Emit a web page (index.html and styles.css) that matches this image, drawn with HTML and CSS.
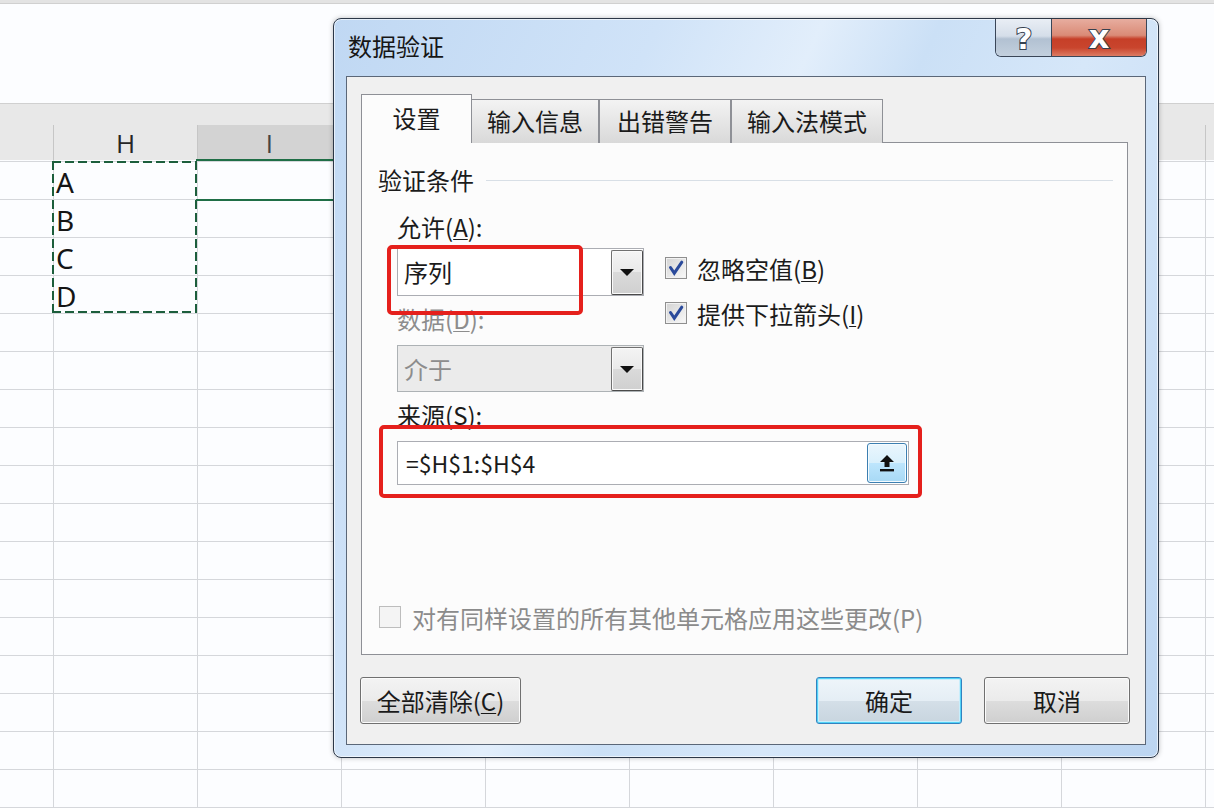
FILE: index.html
```html
<!DOCTYPE html>
<html lang="zh-CN">
<head>
<meta charset="utf-8">
<title>数据验证</title>
<link rel="stylesheet" href="styles.css">
</head>
<body>
<div class="sheet">
  <div class="topline"></div>
  <div class="fbar"></div>
  <div class="strip"></div>
  <div class="colheads">
    <div class="ch ch-g"></div>
    <div class="ch">H</div>
    <div class="ch ch-sel">I</div>
    <div class="ch"></div>
    <div class="ch"></div>
    <div class="ch"></div>
    <div class="ch"></div>
    <div class="ch"></div>
    <div class="ch"></div>
    <div class="ch"></div>
  </div>
  <div class="grid">
    <div class="col-h">
      <div class="cell">A</div>
      <div class="cell">B</div>
      <div class="cell">C</div>
      <div class="cell">D</div>
    </div>
    <div class="col-i">
      <div class="active-cell"></div>
    </div>
  </div>
</div>

<div class="dialog">
  <div class="titlebar">
    <div class="title">数据验证</div>
    <div class="tbtns">
      <div class="tb tb-help"><svg class="glyph" width="30" height="37" viewBox="0 0 30 37"><text x="15" y="30">?</text></svg></div>
      <div class="tb tb-close"><svg class="glyph glyph-x" width="40" height="37" viewBox="0 0 40 37"><text x="20" y="29">x</text></svg></div>
    </div>
  </div>
  <div class="client">
    <div class="tabs">
      <div class="tab tab-active t1">设置</div>
      <div class="tab t2">输入信息</div>
      <div class="tab t3">出错警告</div>
      <div class="tab t4">输入法模式</div>
    </div>
    <div class="panel">
      <div class="legend"><span>验证条件</span><i class="rule"></i></div>
      <div class="criteria">
        <div class="left">
          <div class="lbl">允许(<u>A</u>):</div>
          <div class="combo">
            <div class="combo-text">序列</div>
            <div class="drop"><i class="tri"></i></div>
            <div class="redbox redbox-1"></div>
          </div>
          <div class="lbl lbl-dis">数据(<u>D</u>):</div>
          <div class="combo combo-dis">
            <div class="combo-text">介于</div>
            <div class="drop"><i class="tri"></i></div>
          </div>
        </div>
        <div class="right">
          <div class="chk"><span class="box"><svg width="20" height="20" viewBox="0 0 20 20"><path class="tick" d="M4.5 9.5 L8.3 15.2 L15.8 4.2"/></svg></span><span>忽略空值(<u>B</u>)</span></div>
          <div class="chk"><span class="box"><svg width="20" height="20" viewBox="0 0 20 20"><path class="tick" d="M4.5 9.5 L8.3 15.2 L15.8 4.2"/></svg></span><span>提供下拉箭头(<u>I</u>)</span></div>
        </div>
      </div>
      <div class="source">
        <div class="lbl lbl-src">来源(<u>S</u>):</div>
        <div class="refedit">
          <div class="ref-text">=$H$1:$H$4</div>
          <div class="ref-btn"><svg width="18" height="20" viewBox="0 0 18 20"><path d="M9 2 L16 9 H11.5 V14 H6.5 V9 H2 Z" fill="#111"/><rect x="2" y="16" width="14" height="2.4" fill="#111"/></svg></div>
          <div class="redbox redbox-2"></div>
        </div>
      </div>
      <div class="chk chk-dis applyall"><span class="box"></span><span>对有同样设置的所有其他单元格应用这些更改(P)</span></div>
    </div>
    <div class="btnrow">
      <div class="btn btn-clear">全部清除(<u>C</u>)</div>
      <div class="btn btn-ok">确定</div>
      <div class="btn btn-cancel">取消</div>
    </div>
  </div>
</div>
</body>
</html>
```

FILE: styles.css
```css
html, body {
  margin: 0;
  padding: 0;
}
body {
  width: 1214px;
  height: 808px;
  overflow: hidden;
  position: relative;
  background: #fcfdff;
  font-family: "Noto Sans CJK SC", "Noto Sans", sans-serif;
  color: #1b1b1b;
}

/* ---------- spreadsheet ---------- */
.sheet {
  width: 1214px;
  overflow: hidden;
}
.topline {
  height: 3px;
  background: #e3e3e3;
  border-bottom: 1px solid #d0d0d0;
}
.fbar {
  height: 99px;
}
.strip {
  height: 21px;
  background: #e8e8e8;
  border-top: 1px solid #d0d0d0;
}
.colheads {
  display: flex;
  height: 35px;
  background: #e8e8e8;
}
.ch {
  flex: none;
  width: 144px;
  box-sizing: border-box;
  height: 35px;
  border-right: 1px solid #c6c6c6;
  text-align: center;
  font-family: "Open Sans", "Liberation Sans", sans-serif;
  font-size: 26px;
  line-height: 33px;
  padding-top: 2px;
  color: #262626;
}
.ch-g {
  width: 54px;
}
.ch-sel {
  background: #d3d3d3;
  color: #444;
}
.grid {
  display: flex;
  align-items: flex-start;
  height: 648px;
  background-image:
    linear-gradient(to bottom, transparent 37px, #d5d7db 37px),
    linear-gradient(to right, transparent 143px, #d5d7db 143px);
  background-size: 100% 38px, 144px 100%;
  background-position: 0 2px, 54px 0;
}
.col-h {
  flex: none;
  margin-left: 52px;
  margin-top: 1px;
  width: 145px;
  height: 152px;
  box-sizing: border-box;
  padding: 2px 2px 0 4px;
  background:
    repeating-linear-gradient(to right, #1c5e3c 0 9px, transparent 9px 13px) left top / 100% 2px no-repeat,
    repeating-linear-gradient(to right, #1c5e3c 0 9px, transparent 9px 13px) left bottom / 100% 2px no-repeat,
    repeating-linear-gradient(to bottom, #1c5e3c 0 9px, transparent 9px 13px) left top / 2px 100% no-repeat,
    repeating-linear-gradient(to bottom, #1c5e3c 0 9px, transparent 9px 13px) right top / 2px 100% no-repeat;
}
.cell {
  height: 38px;
  font-family: "Noto Sans", sans-serif;
  font-size: 28px;
  line-height: 38px;
  color: #151515;
}
.col-i {
  flex: none;
  width: 144px;
  margin-left: -1px;
}
.active-cell {
  margin-top: -1px;
  height: 42px;
  box-sizing: border-box;
  border-top: 2px solid #1f6e46;
  border-bottom: 2px solid #1f6e46;
}

/* ---------- dialog ---------- */
.dialog {
  position: absolute;
  left: 333px;
  top: 18px;
  width: 826px;
  height: 740px;
  box-sizing: border-box;
  border: 1px solid #2c3747;
  border-radius: 8px;
  padding: 0 12px 12px;
  display: flex;
  flex-direction: column;
  background: linear-gradient(115deg, #c0d8f3 0%, #d0e3f8 28%, #e2eefb 42%, #cbe0f6 52%, #d6e7f9 66%, #bcd5f1 100%);
  box-shadow: inset 0 0 0 1px rgba(255, 255, 255, 0.6), 0 0 5px rgba(0, 0, 0, 0.25);
}
.titlebar {
  display: flex;
  align-items: flex-start;
  height: 57px;
  flex: none;
}
.title {
  margin-left: 2px;
  font-size: 24px;
  line-height: 54px;
  color: #161616;
}
.tbtns {
  margin-left: auto;
  margin-right: -1px;
  display: flex;
  height: 38px;
  box-sizing: border-box;
  border: 1px solid #3a4658;
  border-top: none;
  border-radius: 0 0 6px 6px;
  overflow: hidden;
}
.tb {
  display: flex;
  align-items: flex-start;
  justify-content: center;
}
.tb-help {
  width: 55px;
  background: linear-gradient(#e9eef5 0%, #d5dee9 46%, #b2c1d2 54%, #c3d0de 100%);
}
.tb-close {
  width: 94px;
  border-left: 1px solid #3a4658;
  background: linear-gradient(#e7ad9f 0%, #da8b77 44%, #c63f28 54%, #c9452d 78%, #dc7b63 100%);
}
.glyph {
  overflow: visible;
}
.glyph text {
  font-family: "DejaVu Sans", sans-serif;
  font-weight: bold;
  font-size: 29px;
  text-anchor: middle;
  fill: #fff;
  stroke: #36414f;
  stroke-width: 2px;
  paint-order: stroke;
}
.glyph-x text {
  font-size: 32px;
}

.client {
  flex: 1;
  min-height: 0;
  border: 1px solid #5b6778;
  background: #f0f0f0;
  padding: 17px 17px 20px 14px;
  display: flex;
  flex-direction: column;
}
.tabs {
  display: flex;
  align-items: flex-end;
  height: 49px;
  flex: none;
  margin-bottom: -1px;
  position: relative;
  z-index: 1;
}
.tab {
  box-sizing: border-box;
  height: 44px;
  border: 1px solid #8e9096;
  border-bottom: none;
  background: linear-gradient(#f3f3f3, #e6e6e6 50%, #d9d9d9);
  text-align: center;
  font-size: 24px;
  line-height: 42px;
  color: #1b1b1b;
}
.tab-active {
  height: 49px;
  background: #fcfcfc;
  line-height: 46px;
  position: relative;
  z-index: 2;
}
.t1 { width: 111px; }
.t2 { width: 128px; margin-left: -1px; }
.t3 { width: 132px; }
.t4 { width: 152px; }

.panel {
  flex: 1;
  min-height: 0;
  border: 1px solid #8e9096;
  background: #fcfcfc;
  display: flex;
  flex-direction: column;
  padding: 24px 0 0 16px;
}
.legend {
  display: flex;
  align-items: center;
  gap: 12px;
  font-size: 24px;
  line-height: 26px;
}
.rule {
  flex: 1;
  height: 1px;
  background: #d8dfe6;
  margin-right: 14px;
}
.criteria {
  display: flex;
  margin: 21px 0 0 19px;
}
.left {
  width: 247px;
}
.lbl {
  font-size: 24px;
  line-height: 26px;
}
.lbl-dis {
  margin-top: 10px;
  color: #8d8d8d;
}
.combo {
  position: relative;
  display: flex;
  height: 48px;
  margin-top: 8px;
  box-sizing: border-box;
  border: 1px solid #abadb3;
  background: #fff;
}
.combo-text {
  flex: 1;
  padding-left: 6px;
  font-size: 24px;
  line-height: 46px;
}
.combo-dis {
  height: 47px;
  margin-top: 13px;
  background: #ebebeb;
  border-color: #adb2b5;
  color: #8d8d8d;
}
.drop {
  width: 32px;
  box-sizing: border-box;
  margin: 1px 0 0;
  height: calc(100% - 1px);
  border: 1px solid #707070;
  border-right-color: #4a4a4a;
  border-bottom-color: #4a4a4a;
  border-radius: 2px;
  background: linear-gradient(#f4f4f4, #e9e9e9 50%, #dadada 50%, #d0d0d0);
  box-shadow: inset 0 0 0 1px #fafafa;
  display: flex;
  align-items: center;
  justify-content: center;
}
.tri {
  width: 0;
  height: 0;
  border-left: 7px solid transparent;
  border-right: 7px solid transparent;
  border-top: 7px solid #111;
}
.redbox {
  position: absolute;
  box-sizing: border-box;
  border: 4px solid #e5201c;
  border-radius: 5px;
  z-index: 3;
}
.redbox-1 {
  left: -11px;
  top: -4px;
  width: 196px;
  height: 70px;
}
.right {
  margin-left: 21px;
  padding-top: 43px;
}
.chk {
  display: flex;
  align-items: center;
  gap: 10px;
  height: 22px;
  font-size: 24px;
  white-space: nowrap;
}
.chk + .chk {
  margin-top: 23px;
}
.box {
  flex: none;
  width: 22px;
  height: 22px;
  box-sizing: border-box;
  border: 1px solid #8f8f8f;
  background: linear-gradient(135deg, #d3d3d3, #f9f9f9);
  box-shadow: inset 0 0 0 1px #f2f2f2;
}
.box svg {
  display: block;
}
.tick {
  fill: none;
  stroke: #2a4a9b;
  stroke-width: 3;
  stroke-linecap: round;
  stroke-linejoin: miter;
}
.source {
  margin: 10px 0 0 19px;
}
.refedit {
  position: relative;
  display: flex;
  width: 512px;
  height: 44px;
  margin-top: 13px;
  box-sizing: border-box;
  border: 1px solid #abadb3;
  background: #fff;
}
.ref-text {
  flex: 1;
  padding-left: 8px;
  font-size: 23px;
  line-height: 42px;
}
.ref-btn {
  width: 40px;
  height: 40px;
  margin: 1px 1px 1px 0;
  box-sizing: border-box;
  border: 1px solid #3c7fb1;
  border-radius: 3px;
  background: linear-gradient(#eaf6fd, #d9f0fc 50%, #bee6fd 50%, #a7d9f5);
  box-shadow: inset 0 0 0 1px #f4fbff;
  display: flex;
  align-items: center;
  justify-content: center;
}
.redbox-2 {
  left: -19px;
  top: -17px;
  width: 543px;
  height: 73px;
}
.applyall {
  margin: auto 0 22px 1px;
  height: 30px;
  gap: 11px;
  color: #8b8b8b;
}
.chk-dis .box {
  border-color: #bdbdbd;
  background: #f4f4f4;
  box-shadow: none;
}
.btnrow {
  display: flex;
  flex: none;
  gap: 22px;
  height: 47px;
  margin: 22px -2px 0 -1px;
}
.btn {
  box-sizing: border-box;
  height: 47px;
  border: 1px solid #707070;
  border-radius: 3px;
  background: linear-gradient(#f3f3f3 0%, #ebebeb 50%, #dddddd 51%, #cfcfcf 100%);
  box-shadow: inset 0 0 0 1px #fbfbfb;
  font-size: 24px;
  line-height: 45px;
  text-align: center;
  color: #1a1a1a;
}
.btn-clear {
  width: 161px;
  margin-right: auto;
}
.btn-ok,
.btn-cancel {
  width: 146px;
}
.btn-ok {
  border-color: #3283c0;
  box-shadow: inset 0 0 0 1px #52d3f7, inset 0 0 0 2px #c8eefc;
  background: linear-gradient(#eef5fa 0%, #e5eef5 50%, #d4dfe8 51%, #c8d5df 100%);
}
u {
  text-decoration: underline;
  text-decoration-thickness: 1px;
  text-underline-offset: 2px;
}
```
